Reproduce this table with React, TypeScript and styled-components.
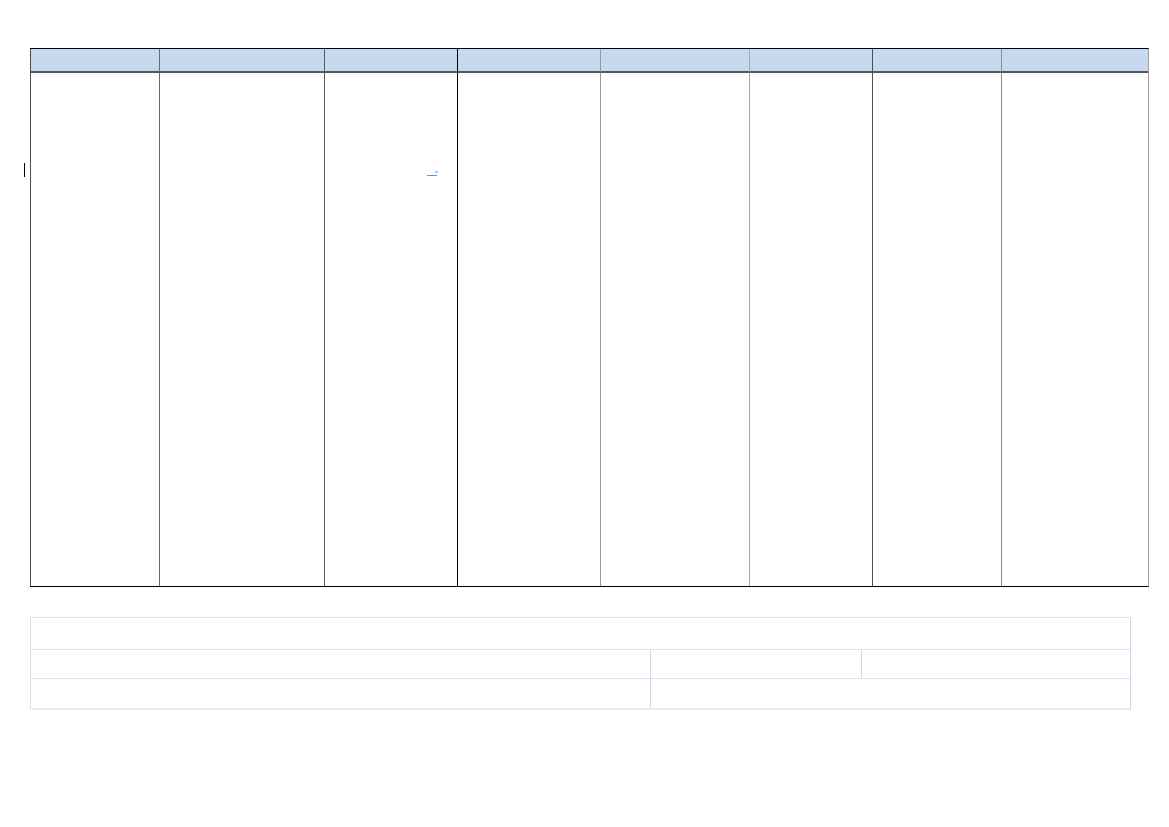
import React from "react";
import styled, { createGlobalStyle } from "styled-components";

const GlobalStyle = createGlobalStyle`
  body {
    margin: 0;
    background: #ffffff;
    font-family: "Liberation Sans", Arial, sans-serif;
  }
`;

const columns = [
  { width: 129, line: "#4d4d4d" },
  { width: 165, line: "#6b6b6b" },
  { width: 133, line: "#5a5a5a" },
  { width: 143, line: "#000000" },
  { width: 149, line: "#9a9a9a" },
  { width: 123, line: "#a6a6a6" },
  { width: 129, line: "#4f4f4f" },
  { width: 147, line: "#8c8c8c" },
];

const App = () => {
  return (
    <Page>
      <GlobalStyle />
      <SheetWrap>
        <Caret />
        <Sheet>
          {columns.map((col, i) => (
            <HeadCell key={"h" + i} $line={col.line} />
          ))}
          {columns.map((col, i) => (
            <BodyCell key={"b" + i} $line={col.line}>
              {i === 2 && (
                <>
                  <Dash />
                  <Dot />
                </>
              )}
            </BodyCell>
          ))}
        </Sheet>
      </SheetWrap>
      <Summary>
        <SummaryRow $cols="1fr" $h={31} />
        <SummaryRow $cols="619px 211px 1fr" $h={28}>
          <SummaryCell />
          <SummaryCell $soft />
          <SummaryCell />
        </SummaryRow>
        <SummaryRow $cols="619px 1fr" $h={29} $last>
          <SummaryCell />
          <SummaryCell $soft />
        </SummaryRow>
      </Summary>
    </Page>
  );
};

export default App;

const Page = styled.div`
  width: 1169px;
  height: 827px;
  padding-top: 48px;
  box-sizing: border-box;
`;

const SheetWrap = styled.div`
  position: relative;
  margin-left: 30px;
  width: 1119px;
`;

const Caret = styled.div`
  position: absolute;
  left: -6px;
  top: 115px;
  width: 1px;
  height: 14px;
  background: #000;
`;

const Sheet = styled.div`
  display: grid;
  grid-template-columns: ${columns.map((c) => c.width + "px").join(" ")};
  border-top: 1px solid #000;
  border-right: 1px solid #a0a0a0;
  border-bottom: 1px solid #000;
`;

const HeadCell = styled.div<{ $line: string }>`
  height: 22px;
  background: #c6d9f0;
  border-left: 1px solid ${(p) => p.$line};
  border-bottom: 2px solid #555555;
`;

const BodyCell = styled.div<{ $line: string }>`
  position: relative;
  height: 513px;
  border-left: 1px solid ${(p) => p.$line};
`;

const Dash = styled.div`
  position: absolute;
  left: 102px;
  top: 102px;
  width: 10px;
  height: 1px;
  background: #5b9bd5;
`;

const Dot = styled.div`
  position: absolute;
  left: 110px;
  top: 98px;
  width: 3px;
  height: 2px;
  background: #a9cdf0;
`;

const Summary = styled.div`
  margin: 30px 0 0 30px;
  width: 1101px;
  border: 1px solid #d7e3f3;
  border-right-color: #c6d9f0;
  border-bottom: 2px solid #e3ebf6;
  box-sizing: border-box;
`;

const SummaryRow = styled.div<{ $cols: string; $h: number; $last?: boolean }>`
  display: grid;
  grid-template-columns: ${(p) => p.$cols};
  height: ${(p) => p.$h}px;
  border-bottom: ${(p) => (p.$last ? "none" : "1px solid #d7e3f3")};
`;

const SummaryCell = styled.div<{ $soft?: boolean }>`
  & + & {
    border-left: 1px solid ${(p) => (p.$soft ? "#c6d9f0" : "#e6eef8")};
  }
`;
